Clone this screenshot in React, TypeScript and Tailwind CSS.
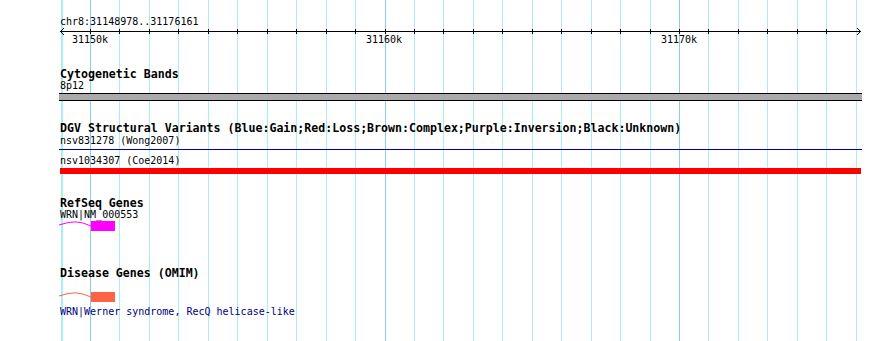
import React from "react";

const gridXs = Array.from({ length: 28 }, (_, i) => Math.round(60.55 + 29.45 * i));

function Grid() {
  return (
    <svg className="absolute inset-0" width={890} height={341}>
      <line x1={62.5} y1={0} x2={62.5} y2={341} stroke="#aaeeee" strokeWidth={1} />
      {gridXs.map((x, i) => (
        <line
          key={x}
          x1={x + 0.5}
          y1={0}
          x2={x + 0.5}
          y2={341}
          stroke={i % 10 === 1 ? "#88ccee" : "#aaeeee"}
          strokeWidth={1}
        />
      ))}
    </svg>
  );
}

function Ruler() {
  return (
    <div className="relative -mt-[2px] h-[20px] -ml-[60px] w-[890px]">
      <svg className="absolute left-0 top-0" width={890} height={10}>
        <line x1={60} y1={5.5} x2={861} y2={5.5} stroke="#000" strokeWidth={1} />
        <polyline points="64,2 60.5,5.5 64,9" fill="none" stroke="#000" strokeWidth={1} />
        <polyline points="857,2 860.5,5.5 857,9" fill="none" stroke="#000" strokeWidth={1} />
        {gridXs.slice(1, 27).map((x) => (
          <line key={x} x1={x + 0.5} y1={3} x2={x + 0.5} y2={8} stroke="#000" strokeWidth={1} />
        ))}
      </svg>
      {[
        { x: 90, label: "31150k" },
        { x: 384, label: "31160k" },
        { x: 679, label: "31170k" },
      ].map((t) => (
        <span
          key={t.label}
          className="absolute top-[8px] w-[60px] -ml-[30px] text-center leading-[12px]"
          style={{ left: t.x }}
        >
          {t.label}
        </span>
      ))}
    </div>
  );
}

function GeneGlyph({ color }: { color: string }) {
  return (
    <svg className="-ml-px block" width={60} height={11}>
      <polyline
        points="0,4 8,1.8 16,0.8 24,2 32,5"
        fill="none"
        stroke={color}
        strokeWidth={1}
      />
      <rect x={32} y={0} width={24} height={10} fill={color} />
    </svg>
  );
}

function Header({ children }: { children: React.ReactNode }) {
  return (
    <div className="font-bold text-[11.6px] leading-[12px] whitespace-nowrap">{children}</div>
  );
}

export default function App() {
  return (
    <div className="relative w-[890px] h-[341px] bg-white overflow-hidden text-black font-['DejaVu_Sans_Mono',monospace] text-[10px]">
      <Grid />
      <div className="relative pl-[60px] pt-[16px]">
        <div className="leading-[12px]">chr8:31148978..31176161</div>
        <Ruler />

        <div className="mt-[22px]">
          <Header>Cytogenetic Bands</Header>
          <div className="leading-[12px]">8p12</div>
          <div className="-ml-px mt-px w-[803px] h-[8px] bg-[#aaaaaa] border-y border-black" />
        </div>

        <div className="mt-[21px]">
          <Header>DGV Structural Variants (Blue:Gain;Red:Loss;Brown:Complex;Purple:Inversion;Black:Unknown)</Header>
          <div className="leading-[12px] mt-px">nsv831278 (Wong2007)</div>
          <div className="-ml-px mt-[2px] w-[803px] h-px bg-[#0000aa]" />
          <div className="leading-[12px] mt-[5px]">nsv1034307 (Coe2014)</div>
          <div className="mt-px w-[801px] h-[6px] bg-[#ff0000]" />
        </div>

        <div className="mt-[23px]">
          <Header>RefSeq Genes</Header>
          <div className="leading-[12px]">WRN|NM_000553</div>
          <GeneGlyph color="#ff00ff" />
        </div>

        <div className="mt-[35px]">
          <Header>Disease Genes (OMIM)</Header>
          <div className="h-[13px]" />
          <GeneGlyph color="#ff6347" />
          <div className="leading-[12px] mt-[3px] text-[#000080]">WRN|Werner syndrome, RecQ helicase-like</div>
        </div>
      </div>
    </div>
  );
}
